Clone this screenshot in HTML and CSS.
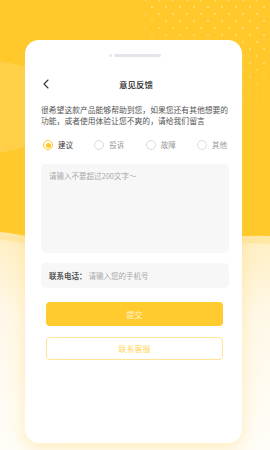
FILE: index.html
```html
<!DOCTYPE html>
<html lang="zh">
<head>
<meta charset="utf-8">
<link rel="stylesheet" href="styles.css">
</head>
<body>
<div class="bg">
  <div class="dots"></div>
  <div class="blob"></div>
  <svg class="waves" width="270" height="450" viewBox="0 0 270 450">
    <defs>
      <linearGradient id="cream" x1="0" y1="0" x2="0" y2="1">
        <stop offset="0" stop-color="#FFEFC4"/>
        <stop offset="0.35" stop-color="#FFF8E8"/>
        <stop offset="1" stop-color="#FFFDF8"/>
      </linearGradient>
    </defs>
    <path d="M0 232 C40 236 60 248 90 250 C150 250 200 234 270 236 L270 450 L0 450 Z" fill="#FFE7A6"/>
    <path d="M0 240 C40 244 70 256 110 256 C170 256 210 240 270 244 L270 450 L0 450 Z" fill="url(#cream)"/>
  </svg>
</div>

<main class="page">
  <section class="card">
    <div class="handle"><span class="handle-dot"></span><span class="handle-bar"></span></div>

    <header class="header">
      <svg class="back" width="6" height="10" viewBox="0 0 6 10"><path d="M5 1 L1 5 L5 9" fill="none" stroke="#333" stroke-width="1.1" stroke-linecap="round" stroke-linejoin="round"/></svg>
      <h1 class="title">意见反馈</h1>
    </header>

    <p class="desc">很希望这款产品能够帮助到您，如果您还有其他想要的功能，或者使用体验让您不爽的，请给我们留言</p>

    <div class="radios">
      <label class="radio checked"><span class="circle"><span class="dot"></span></span><span class="rlabel">建议</span></label>
      <label class="radio"><span class="circle"></span><span class="rlabel">投诉</span></label>
      <label class="radio"><span class="circle"></span><span class="rlabel">故障</span></label>
      <label class="radio"><span class="circle"></span><span class="rlabel">其他</span></label>
    </div>

    <div class="textarea">请输入不要超过200文字～</div>

    <div class="phone"><span class="phone-label">联系电话：</span><span class="phone-ph">请输入您的手机号</span></div>

    <div class="btn submit">提交</div>
    <div class="btn contact">联系客服</div>
  </section>
</main>
</body>
</html>
```

FILE: styles.css
```css
* { box-sizing: border-box; margin: 0; padding: 0; }

html, body {
  width: 270px;
  height: 450px;
  overflow: hidden;
}

body {
  position: relative;
  background: #FFC92B;
  font-family: "Noto Sans CJK SC", "Noto Sans", sans-serif;
  color: #333;
}

.bg {
  position: absolute;
  inset: 0;
  z-index: 0;
}

.dots {
  position: absolute;
  left: 145px;
  top: 0;
  width: 125px;
  height: 120px;
  background-image:
    radial-gradient(circle, rgba(255, 222, 110, 0.9) 0.9px, transparent 1.3px),
    radial-gradient(circle, rgba(255, 222, 110, 0.9) 0.9px, transparent 1.3px);
  background-size: 14px 14px;
  background-position: 0 0, 7px 7px;
  -webkit-mask-image: linear-gradient(200deg, #000 30%, transparent 75%);
  mask-image: linear-gradient(200deg, #000 30%, transparent 75%);
}

.blob {
  position: absolute;
  left: -80px;
  top: 61px;
  width: 140px;
  height: 92px;
  border-radius: 50%;
  background: #FFD048;
}

.waves {
  position: absolute;
  left: 0;
  top: 0;
}

.page {
  position: relative;
  z-index: 1;
  padding: 40px 28px 0 25px;
}

.card {
  height: 403px;
  background: #fff;
  border-radius: 14px;
  padding: 0 13px 0 16px;
  box-shadow: 0 6px 18px rgba(255, 205, 80, 0.35);
  display: flex;
  flex-direction: column;
}

.handle {
  display: flex;
  justify-content: center;
  align-items: center;
  gap: 2px;
  margin-top: 14px;
  height: 3px;
}

.handle-dot {
  width: 3px;
  height: 3px;
  border-radius: 50%;
  background: #E4E4EC;
}

.handle-bar {
  width: 47px;
  height: 3px;
  border-radius: 2px;
  background: #E4E4EC;
}

.header {
  position: relative;
  display: flex;
  align-items: center;
  justify-content: center;
  height: 16px;
  margin-top: 19px;
}

.back {
  position: absolute;
  left: 2px;
  top: 3px;
}

.title {
  font-size: 8.5px;
  font-weight: 500;
  color: #222;
  line-height: 16px;
  margin-left: 2px;
}

.desc {
  margin-top: 12px;
  font-size: 7.8px;
  line-height: 11px;
  color: #555;
}

.radios {
  display: flex;
  justify-content: space-between;
  align-items: center;
  margin-top: 14px;
  padding: 0 2px 0 2px;
  height: 10px;
}

.radio {
  display: flex;
  align-items: center;
  gap: 5px;
}

.circle {
  width: 10px;
  height: 10px;
  border-radius: 50%;
  border: 1px solid #DCDCDC;
  display: flex;
  align-items: center;
  justify-content: center;
}

.radio.checked .circle {
  border-color: #FFC92B;
}

.dot {
  width: 5px;
  height: 5px;
  border-radius: 50%;
  background: #FFC92B;
}

.rlabel {
  font-size: 7.5px;
  color: #999;
  line-height: 10px;
}

.radio.checked .rlabel {
  color: #333;
}

.textarea {
  margin-top: 14px;
  height: 89px;
  background: #F7F7F7;
  border-radius: 5px;
  padding: 7px 8px;
  font-size: 7.5px;
  line-height: 10px;
  color: #AAA;
}

.phone {
  margin-top: 10px;
  height: 25px;
  background: #F7F7F7;
  border-radius: 5px;
  padding: 0 8px;
  display: flex;
  align-items: center;
  font-size: 7.5px;
}

.phone-label {
  color: #555;
  font-weight: 700;
}

.phone-ph {
  color: #AAA;
  margin-left: 2px;
}

.btn {
  margin: 0 6px 0 5px;
  display: flex;
  align-items: center;
  justify-content: center;
  font-size: 8px;
  border-radius: 4px;
}

.submit {
  margin-top: 14px;
  height: 24px;
  background: #FFCB2E;
  color: #FFF6DA;
}

.contact {
  margin-top: 11px;
  height: 23px;
  border: 1px solid #FFE396;
  color: #FFD760;
  background: #fff;
}
```
